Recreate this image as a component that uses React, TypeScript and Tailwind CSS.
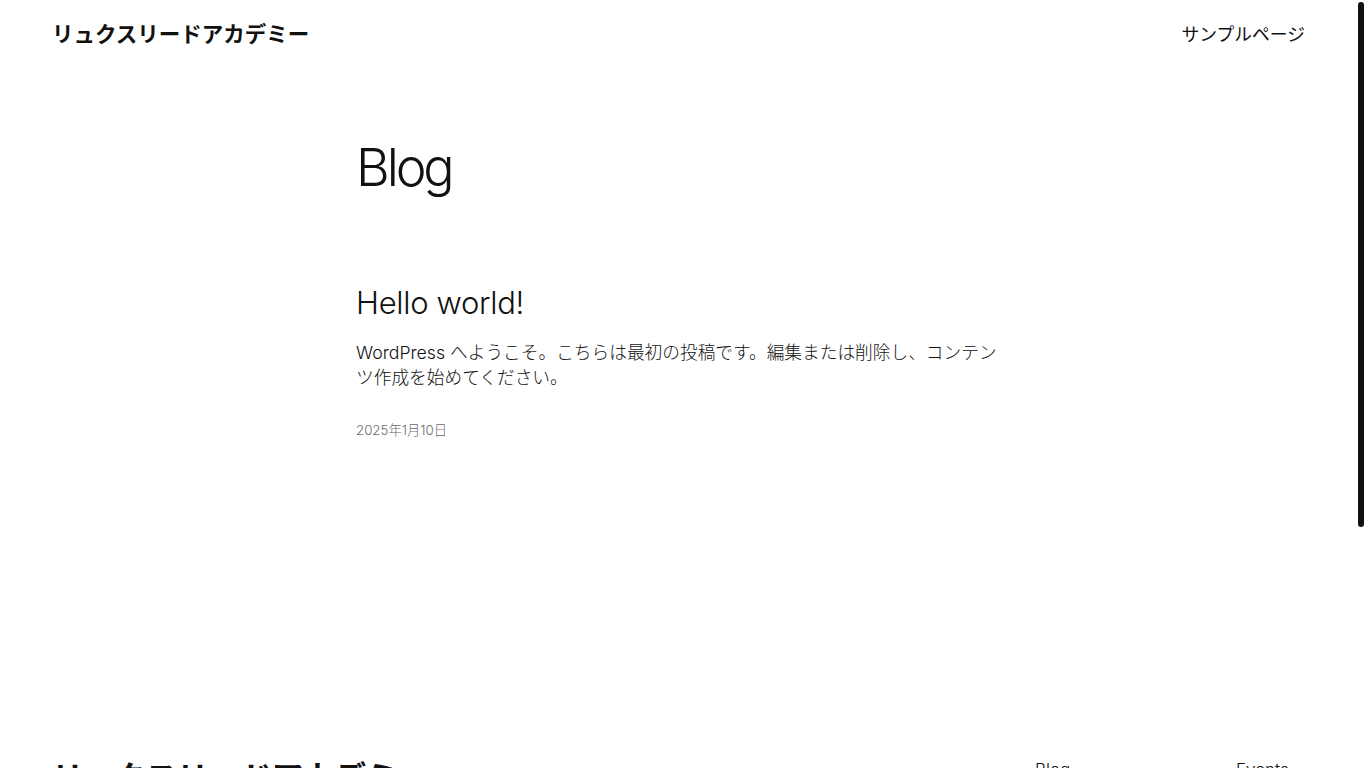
import React from 'react';

const sans = "font-['Inter','Noto_Sans_CJK_JP',sans-serif]";

const footerCols = [
  ['Blog', 'About', 'FAQs', 'Authors'],
  ['Events', 'Shop', 'Patterns', 'Themes'],
];

const App: React.FC = () => {
  return (
    <div className={`flex h-screen w-full overflow-hidden bg-white text-[#111111] ${sans}`}>
      <div className="flex-1 min-w-0">
        {/* Header */}
        <header className="flex h-[70px] items-center justify-between px-[52px]">
          <a className="text-[21.5px] font-semibold leading-none">リュクスリードアカデミー</a>
          <nav className="text-[17.8px] leading-none">サンプルページ</nav>
        </header>

        {/* Main */}
        <main className="mx-auto w-[645px] pt-[67px] pb-[312px]">
          <h1 className="text-[52px] font-light leading-[1.2] tracking-[-0.06em]">Blog</h1>

          <article className="mt-[85px]">
            <h2 className="text-[31px] font-light leading-[1.2] tracking-[-0.01em]">Hello world!</h2>
            <p className="mt-[18px] text-[17.7px] font-light leading-[25px]">
              WordPress へようこそ。こちらは最初の投稿です。編集または削除し、コンテンツ作成を始めてください。
            </p>
            <div className="mt-[31px] text-[13.3px] font-light leading-[1.4] text-[#6b6b6b]">2025年1月10日</div>
          </article>
        </main>

        {/* Footer */}
        <footer className="flex justify-between px-[52px]">
          <div className="mt-[8px] text-[31.5px] font-semibold leading-[1.2]">リュクスリードアカデミー</div>
          <div className="mt-[7px] flex">
            {footerCols.map((col, i) => (
              <ul key={i} className={`${i === 0 ? 'w-[201px]' : 'w-[69px]'} flex flex-col gap-2 text-[17px] font-light leading-[1.5]`}>
                {col.map((item) => (
                  <li key={item}>{item}</li>
                ))}
              </ul>
            ))}
          </div>
        </footer>
      </div>

      {/* Scrollbar */}
      <div className="w-[9px] shrink-0 pl-[1px] pt-[2px]">
        <div className="h-[525px] w-[6px] rounded-full bg-[#111111]" />
      </div>
    </div>
  );
};

export default App;
